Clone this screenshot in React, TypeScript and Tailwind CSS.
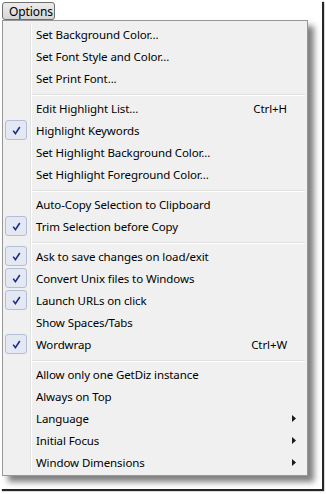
import React from "react";

type Item =
  | { sep: true }
  | { sep?: false; label: string; checked?: boolean; shortcut?: string; sub?: boolean };

const items: Item[] = [
  { label: "Set Background Color..." },
  { label: "Set Font Style and Color..." },
  { label: "Set Print Font..." },
  { sep: true },
  { label: "Edit Highlight List...", shortcut: "Ctrl+H" },
  { label: "Highlight Keywords", checked: true },
  { label: "Set Highlight Background Color..." },
  { label: "Set Highlight Foreground Color..." },
  { sep: true },
  { label: "Auto-Copy Selection to Clipboard" },
  { label: "Trim Selection before Copy", checked: true },
  { sep: true },
  { label: "Ask to save changes on load/exit", checked: true },
  { label: "Convert Unix files to Windows", checked: true },
  { label: "Launch URLs on click", checked: true },
  { label: "Show Spaces/Tabs" },
  { label: "Wordwrap", checked: true, shortcut: "Ctrl+W" },
  { sep: true },
  { label: "Allow only one GetDiz instance" },
  { label: "Always on Top" },
  { label: "Language", sub: true },
  { label: "Initial Focus", sub: true },
  { label: "Window Dimensions", sub: true },
];

function Check() {
  return (
    <div className="w-[22px] h-[20px] rounded-[3px] border border-[#b4bdd6] bg-[#e4e8f3] flex items-center justify-center">
      <svg width="9" height="9" viewBox="0 0 9 9">
        <path d="M1.2 4.6 L3.4 7.6 L7.8 1" fill="none" stroke="#1c2a8a" strokeWidth="1.6" />
      </svg>
    </div>
  );
}

function Arrow() {
  return (
    <svg width="4" height="7" viewBox="0 0 4 7">
      <path d="M0 0 L4 3.5 L0 7 Z" fill="#1a1a1a" />
    </svg>
  );
}

export default function App() {
  return (
    <div className="w-[326px] h-[494px] bg-white" style={{ fontFamily: "'Noto Sans', sans-serif" }}>
      <div className="w-[322px] h-[489px] bg-white shadow-[2px_2px_1px_rgba(0,0,0,0.85)] flex flex-col">
        <div className="h-[20px] pt-[2px] pl-[2px] flex">
          <div className="h-[18px] w-[53px] rounded-[3px] border border-[#6f6f6f] bg-gradient-to-b from-[#ececec] to-[#d6d6d6] flex items-center pl-[6px] pt-[1px] text-[12px] tracking-[-0.1px] text-black leading-none">
            Options
          </div>
        </div>
        <div className="ml-[2px] w-[306px] h-[456px] border border-[#979797] bg-[#f0f0f0] p-[2px] shadow-[6px_6px_6px_rgba(0,0,0,0.5)] flex flex-col">
          {items.map((it, i) =>
            it.sep ? (
              <div key={i} className="h-[8px] flex">
                <div className="w-[25px]" />
                <div className="w-[1px] bg-[#e2e3e3]" />
                <div className="w-[1px] bg-white" />
                <div className="flex-1 flex flex-col">
                  <div className="h-[5px]" />
                  <div className="h-[1px] bg-[#e0e0e0]" />
                  <div className="h-[1px] bg-white" />
                </div>
              </div>
            ) : (
              <div key={i} className="h-[22px] flex items-stretch text-[11.5px] tracking-[-0.1px] text-black">
                <div className="w-[25px] flex items-center">
                  {it.checked ? <Check /> : null}
                </div>
                <div className="w-[1px] bg-[#e2e3e3]" />
                <div className="w-[1px] bg-white" />
                <div className="flex-1 flex items-center pl-[4px] pt-[1px] whitespace-nowrap">{it.label}</div>
                {it.shortcut ? (
                  <div className="flex items-center pt-[1px] whitespace-nowrap">{it.shortcut}</div>
                ) : null}
                <div className="w-[18px] flex items-center justify-end pr-[9px]">
                  {it.sub ? <Arrow /> : null}
                </div>
              </div>
            )
          )}
        </div>
      </div>
    </div>
  );
}
